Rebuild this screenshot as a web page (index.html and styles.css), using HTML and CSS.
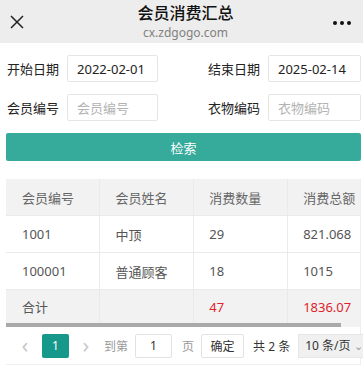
FILE: index.html
```html
<!DOCTYPE html>
<html lang="zh-CN">
<head>
    <meta charset="UTF-8">
    <meta name="viewport" content="width=device-width, initial-scale=1.0">
    <title>会员消费汇总</title>
    <link rel="stylesheet" href="styles.css">
</head>
<body>
    <header class="topbar">
        <svg class="close" width="14" height="14" viewBox="0 0 14 14">
            <path d="M1 1 L13 13 M13 1 L1 13" stroke="#222" stroke-width="1.5" fill="none"/>
        </svg>
        <div class="titles">
            <div class="title">会员消费汇总</div>
            <div class="sub">cx.zdgogo.com</div>
        </div>
        <div class="more"><i></i><i></i><i></i></div>
    </header>

    <form class="filters" onsubmit="return false">
        <div class="row">
            <label class="field">
                <span>开始日期</span>
                <input type="text" value="2022-02-01">
            </label>
            <label class="field">
                <span>结束日期</span>
                <input type="text" value="2025-02-14">
            </label>
        </div>
        <div class="row">
            <label class="field">
                <span>会员编号</span>
                <input type="text" placeholder="会员编号">
            </label>
            <label class="field">
                <span>衣物编码</span>
                <input type="text" placeholder="衣物编码">
            </label>
        </div>
        <button class="search">检索</button>
    </form>

    <div class="grid">
        <div class="scroll">
            <table>
                <thead>
                    <tr><th>会员编号</th><th>会员姓名</th><th>消费数量</th><th>消费总额</th></tr>
                </thead>
                <tbody>
                    <tr><td>1001</td><td>中顶</td><td>29</td><td>821.068</td></tr>
                    <tr><td>100001</td><td>普通顾客</td><td>18</td><td>1015</td></tr>
                </tbody>
                <tfoot>
                    <tr><td>合计</td><td></td><td class="red">47</td><td class="red">1836.07</td></tr>
                </tfoot>
            </table>
        </div>
        <div class="bar"><div class="thumb"></div></div>
        <div class="pager">
            <span class="arrow prev">&lsaquo;</span>
            <span class="page on">1</span>
            <span class="arrow next">&rsaquo;</span>
            <span class="muted jump">到第</span>
            <input class="goto" type="text" value="1">
            <span class="muted unit">页</span>
            <button class="ok">确定</button>
            <span class="count">共 2 条</span>
            <span class="size">10 条/页 <em>&#8964;</em></span>
        </div>
    </div>
</body>
</html>
```

FILE: styles.css
```css
body {
    margin: 0;
    font-family: "Noto Sans", "Noto Sans CJK SC", sans-serif;
    color: #333;
    background: #fff;
    width: 363px;
    overflow: hidden;
}

.topbar {
    height: 43px;
    background: #ededed;
    display: flex;
    align-items: center;
    justify-content: space-between;
    padding: 0 12px 0 10px;
}

.close {
    margin-top: 1px;
}

.titles {
    text-align: center;
    margin-left: 14px;
}

.title {
    font-size: 16px;
    font-weight: 500;
    color: #111;
    line-height: 20px;
}

.sub {
    font-size: 12px;
    color: #808080;
    line-height: 16px;
    margin-top: 2px;
}

.more {
    display: flex;
    gap: 3px;
    padding-top: 2px;
}

.more i {
    width: 4px;
    height: 4px;
    border-radius: 50%;
    background: #111;
}

.filters {
    padding: 12px 2px 0 6px;
}

.row {
    display: flex;
    justify-content: space-between;
    margin-bottom: 12px;
}

.field {
    display: flex;
    align-items: center;
    font-size: 13px;
    color: #222;
}

.field span {
    margin-right: 8px;
    margin-left: 1px;
}

.field input {
    width: 91px;
    height: 27px;
    box-sizing: border-box;
    border: 1px solid #e6e6e6;
    border-radius: 2px;
    padding: 0 9px;
    font: inherit;
    font-size: 13px;
    color: #222;
    outline: none;
}

.row .field:last-child input {
    width: 93px;
}

.field input::placeholder {
    color: #b3b3b3;
}

.search {
    display: block;
    width: 355px;
    height: 28px;
    border: 0;
    border-radius: 2px;
    background: #36aa9b;
    color: #fff;
    font: inherit;
    font-size: 13px;
}

.grid {
    margin: 18px 2px 0 6px;
    border: 1px solid #eee;
    border-top: 0;
    border-left: 0;
}

.scroll {
    overflow: hidden;
    background: #f2f2f2;
}

table {
    border-collapse: collapse;
    width: 376px;
    table-layout: fixed;
    font-size: 13px;
    background: #fff;
}

th, td {
    text-align: left;
    padding: 0 15px;
    height: 36px;
    border: 1px solid #eaeaea;
    white-space: nowrap;
    font-weight: normal;
}

th:first-child, td:first-child {
    border-left: 0;
    padding-left: 16px;
}

thead th {
    background: #f2f2f2;
    color: #666;
    border-top: 0;
}

tbody td {
    color: #555;
}

tfoot td {
    background: #f2f2f2;
    color: #555;
    height: 33px;
    border-bottom: 0;
}

.red {
    color: #e0222b !important;
}

.bar {
    height: 4px;
    background: #f2f2f2;
}

.thumb {
    width: 335px;
    height: 4px;
    background: #a9a9a9;
}

.pager {
    display: flex;
    align-items: center;
    height: 37px;
    padding-left: 14px;
    font-size: 12px;
    white-space: nowrap;
    overflow: visible;
}

.pager > * {
    flex-shrink: 0;
}

.arrow {
    font-size: 22px;
    color: #c8c8c8;
    width: 10px;
    text-align: center;
    line-height: 20px;
    margin-top: -3px;
}

.page {
    width: 27px;
    height: 24px;
    line-height: 24px;
    text-align: center;
    margin: 0 12px;
    border-radius: 2px;
}

.page.on {
    background: #16998a;
    color: #fff;
}

.muted {
    color: #999;
}

.jump {
    margin-left: 13px;
}

.goto {
    width: 37px;
    height: 24px;
    box-sizing: border-box;
    border: 1px solid #e2e2e2;
    border-radius: 2px;
    text-align: center;
    font: inherit;
    color: #333;
    margin: 0 10px 0 7px;
    padding: 0;
}

.ok {
    height: 24px;
    width: 43px;
    box-sizing: border-box;
    border: 1px solid #e2e2e2;
    border-radius: 2px;
    background: #fff;
    font: inherit;
    color: #333;
    padding: 0;
    margin-left: 7px;
}

.count {
    margin-left: 9px;
}

.size {
    margin-left: 8px;
    background: #f0f0f0;
    border: 1px solid #e6e6e6;
    height: 24px;
    line-height: 22px;
    box-sizing: border-box;
    padding-left: 6px;
    width: 72px;
    color: #333;
    margin-right: -10px;
}

.size em {
    font-style: normal;
    color: #999;
    font-size: 11px;
}
```
